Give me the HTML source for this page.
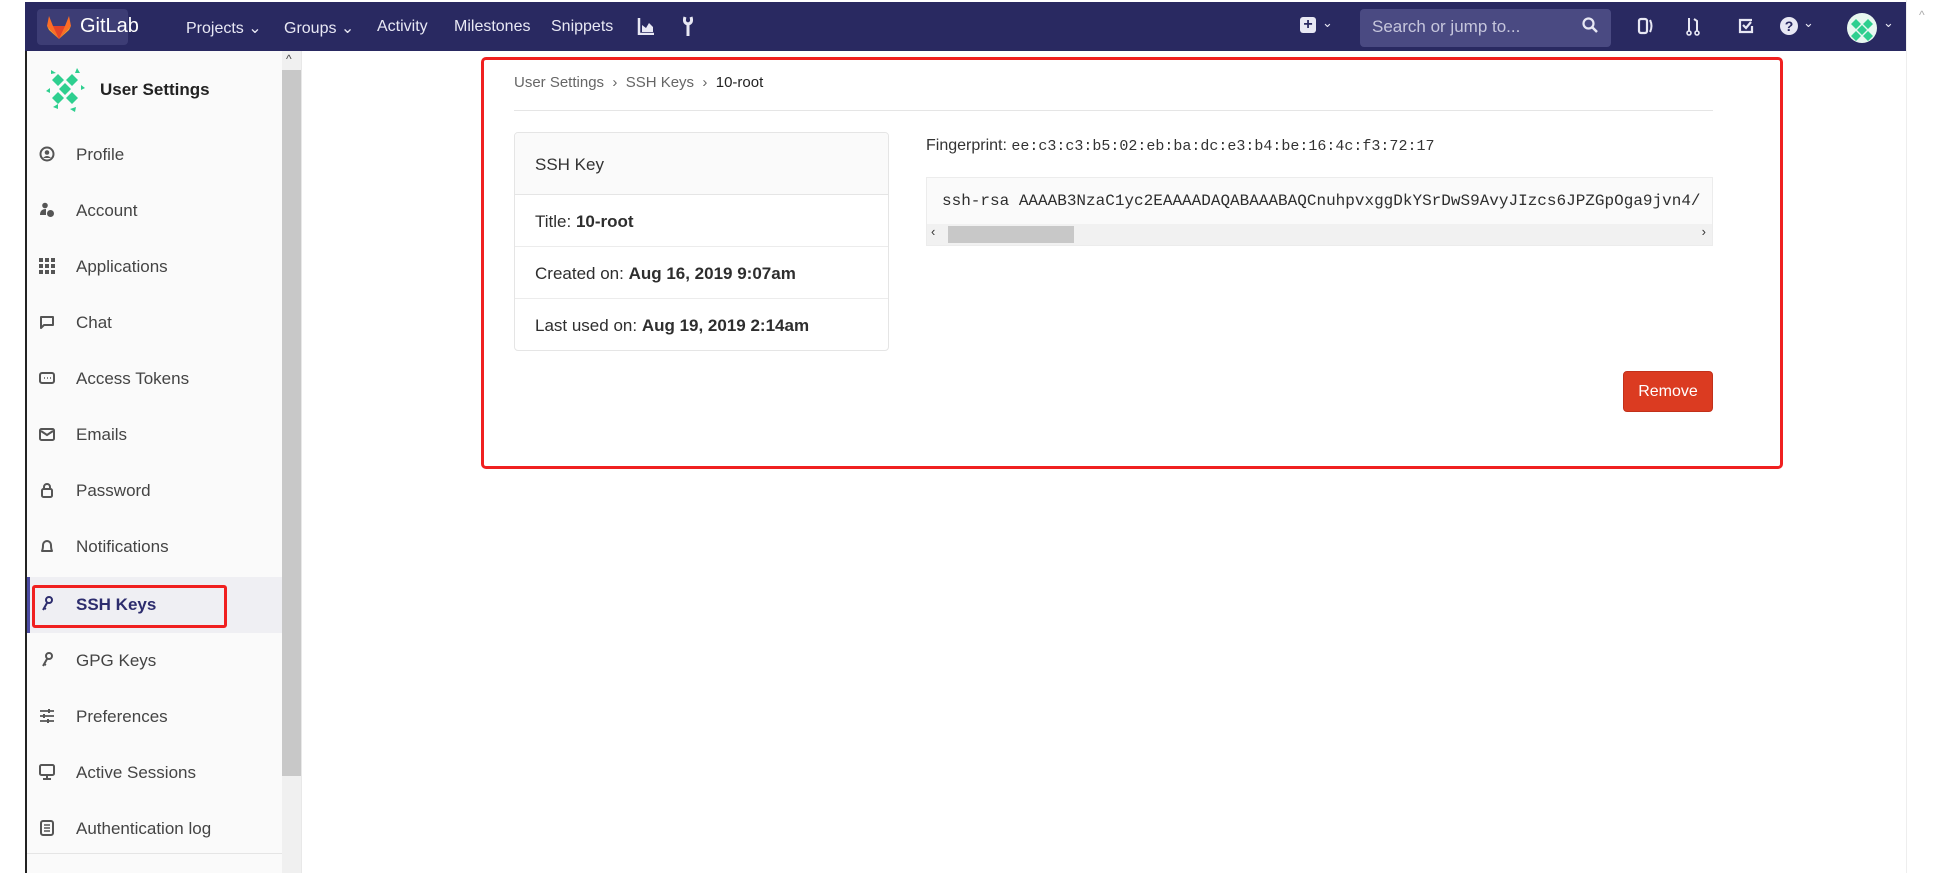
<!DOCTYPE html>
<html><head><meta charset="utf-8"><style>
*{box-sizing:border-box;margin:0;padding:0}
body{width:1946px;height:873px;overflow:hidden;background:#fff;font-family:"Liberation Sans",sans-serif;position:relative;color:#2e2e2e}
.abs{position:absolute}
#nav{left:25px;top:2px;width:1881px;height:49px;background:#292961;color:#fff;font-size:16px}
#nav .it{position:absolute;top:16px;color:#e8e8f4}
#side{left:25px;top:51px;width:257px;height:822px;background:#fafafa;border-left:2px solid #222}
.si{position:absolute;left:0;width:257px;height:56px;font-size:17px;color:#444}
.si span{position:absolute;left:49px;top:18px}
.si svg{position:absolute;left:12px;top:19px}
</style></head><body>
<div class="abs" style="left:0;top:0;width:1946px;height:2px;background:#fff"></div>
<div id="nav" class="abs">
 <div class="abs" style="left:12px;top:7px;width:91px;height:36px;background:#3d3d75;border-radius:4px"></div>
 <svg class="abs" style="left:20px;top:12px" width="28" height="26" viewBox="0 0 28 26"><path d="M14 25L2 12 4 2 8 12H20L24 2 26 12Z" fill="#fc6d26"/><path d="M14 25L8 12H20Z" fill="#e24329"/><path d="M2 12l12 13L4 16Z" fill="#fca326"/><path d="M26 12L14 25 24 16Z" fill="#fca326"/></svg>
 <div class="it" style="left:55px;top:13px;font-size:20px;color:#fff">GitLab</div>
 <div class="it" style="left:161px">Projects ⌄</div>
 <div class="it" style="left:259px">Groups ⌄</div>
 <div class="it" style="left:352px">Activity</div>
 <div class="it" style="left:429px">Milestones</div>
 <div class="it" style="left:526px">Snippets</div>
 <svg class="abs" style="left:612px;top:15px" width="18" height="18"><path d="M2 1V17H17" stroke="#e8e8f4" stroke-width="2.5" fill="none"/><path d="M5 15V8L9 11 12 6 16 10V15Z" fill="#e8e8f4"/></svg>
 <svg class="abs" style="left:657px;top:13px" width="12" height="22"><path d="M6 21V9M3 2Q1 8 6 9Q11 8 9 2" stroke="#e8e8f4" stroke-width="3" fill="none"/></svg>
 <div class="abs" style="left:1275px;top:15px;width:16px;height:16px;background:#e8e8f4;border-radius:3px;color:#292961;font-weight:bold;font-size:16px;line-height:16px;text-align:center">+</div>
 <div class="it" style="left:1297px;top:13px;font-size:13px">⌄</div>
 <div class="abs" style="left:1335px;top:7px;width:251px;height:38px;background:#4a4a82;border-radius:4px"></div>
 <div class="it" style="left:1347px;top:15px;color:#c6c6dc;font-size:17px">Search or jump to...</div>
 <svg class="abs" style="left:1557px;top:15px" width="16" height="16"><circle cx="6.5" cy="6.5" r="5" stroke="#e8e8f4" stroke-width="2.2" fill="none"/><path d="M10 10L15 15" stroke="#e8e8f4" stroke-width="2.5"/></svg>
 <svg class="abs" style="left:1612px;top:15px" width="18" height="18"><rect x="2" y="2" width="8" height="14" rx="2" stroke="#e8e8f4" stroke-width="2.2" fill="none"/><path d="M13 3Q16 9 13 15" stroke="#e8e8f4" stroke-width="2" fill="none"/></svg>
 <svg class="abs" style="left:1660px;top:14px" width="16" height="20"><circle cx="4" cy="17" r="2" stroke="#e8e8f4" stroke-width="1.6" fill="none"/><circle cx="12" cy="17" r="2" stroke="#e8e8f4" stroke-width="1.6" fill="none"/><path d="M4 15V2M12 15V5L9 3" stroke="#e8e8f4" stroke-width="2" fill="none"/></svg>
 <svg class="abs" style="left:1712px;top:15px" width="18" height="18"><path d="M15 3H3V15H15V9" stroke="#e8e8f4" stroke-width="2.2" fill="none"/><path d="M6 8L9 11 14 5" stroke="#e8e8f4" stroke-width="2.2" fill="none"/></svg>
 <div class="abs" style="left:1755px;top:15px;width:18px;height:18px;background:#e8e8f4;border-radius:50%;color:#292961;font-weight:bold;font-size:14px;line-height:18px;text-align:center">?</div>
 <div class="it" style="left:1778px;top:13px;font-size:13px">⌄</div>
 <div class="abs" style="left:1822px;top:11px;width:30px;height:30px;border-radius:50%;background:#e8f7f0;overflow:hidden"><svg width="30" height="30"><g fill="#2ecf8f"><path d="M9 6l5 5-5 5-5-5zM21 6l5 5-5 5-5-5zM15 12l5 5-5 5-5-5zM9 18l5 5-5 5-5-5zM21 18l5 5-5 5-5-5z"/></g></svg></div>
 <div class="it" style="left:1858px;top:13px;font-size:13px">⌄</div>
</div>
<div class="abs" style="left:1906px;top:0;width:40px;height:873px;background:#fff;border-left:1px solid #eee"></div>
<div class="abs" style="left:1919px;top:8px;font-size:12px;color:#aaa">^</div>

<div id="side" class="abs">
 <svg class="abs" style="left:14px;top:15px" width="48" height="48"><g fill="#2ecf8f"><path d="M17 8l6 6-6 6-6-6zM31 8l6 6-6 6-6-6zM24 17l6 6-6 6-6-6zM17 26l6 6-6 6-6-6zM31 26l6 6-6 6-6-6z"/><path d="M5 25l4-3v5zM40 19l4 3-4 2zM10 4l5 3-5 1zM36 2l3 5h-5zM12 41l5-3 0 5zM29 43l6-2-1 5z"/></g></svg>
 <div class="abs" style="left:73px;top:29px;font-size:17px;font-weight:bold;color:#222">User Settings</div>
 <div class="si" style="top:76px"><svg width="16" height="16"><circle cx="8" cy="8" r="6.5" stroke="#555" stroke-width="2" fill="none"/><circle cx="8" cy="6.5" r="2.3" fill="#555"/><path d="M4 12q4-4 8 0" fill="#555"/></svg><span>Profile</span></div>
 <div class="si" style="top:132px"><svg width="16" height="16"><circle cx="6" cy="3.5" r="2.8" fill="#555"/><path d="M1 13q0-6 6-6v6z" fill="#555"/><circle cx="11.5" cy="11.5" r="3.5" fill="#555"/></svg><span>Account</span></div>
 <div class="si" style="top:188px"><svg width="16" height="16" fill="#555"><rect x="0" y="0" width="4" height="4"/><rect x="6" y="0" width="4" height="4"/><rect x="12" y="0" width="4" height="4"/><rect x="0" y="6" width="4" height="4"/><rect x="6" y="6" width="4" height="4"/><rect x="12" y="6" width="4" height="4"/><rect x="0" y="12" width="4" height="4"/><rect x="6" y="12" width="4" height="4"/><rect x="12" y="12" width="4" height="4"/></svg><span>Applications</span></div>
 <div class="si" style="top:244px"><svg width="16" height="16"><path d="M2 14V3h12v8H5z" stroke="#555" stroke-width="2" fill="none" stroke-linejoin="round"/></svg><span>Chat</span></div>
 <div class="si" style="top:300px"><svg width="16" height="16"><rect x="1" y="3" width="14" height="10" rx="2" stroke="#555" stroke-width="2" fill="none"/><path d="M5 8h1M8 8h1M11 8h1" stroke="#555" stroke-width="1.6"/></svg><span>Access Tokens</span></div>
 <div class="si" style="top:356px"><svg width="16" height="16"><rect x="1" y="3" width="14" height="11" rx="1.5" stroke="#555" stroke-width="2" fill="none"/><path d="M2 5l6 4 6-4" stroke="#555" stroke-width="2" fill="none"/></svg><span>Emails</span></div>
 <div class="si" style="top:412px"><svg width="16" height="16"><rect x="3" y="7" width="10" height="8" rx="1.5" stroke="#555" stroke-width="2" fill="none"/><path d="M5 7V5a3 3 0 0 1 6 0v2" stroke="#555" stroke-width="2" fill="none"/></svg><span>Password</span></div>
 <div class="si" style="top:468px"><svg width="16" height="16"><path d="M3 13q1-2 1-6a4 4 0 0 1 8 0q0 4 1 6z" stroke="#555" stroke-width="2" fill="none" stroke-linejoin="round"/></svg><span>Notifications</span></div>
 <div class="si" style="top:526px;background:#efeff3;border-left:3px solid #4b4ba3;color:#2d2d6e;font-weight:bold"><svg width="16" height="16" style="left:9px"><circle cx="10" cy="4" r="3" stroke="#2d2d6e" stroke-width="2" fill="none"/><path d="M8 7L4 14M5 12l2 1" stroke="#2d2d6e" stroke-width="2"/></svg><span style="left:46px">SSH Keys</span></div>
 <div class="abs" style="left:5px;top:534px;width:195px;height:43px;border:3px solid #f02020;border-radius:3px"></div>
 <div class="si" style="top:582px"><svg width="16" height="16"><circle cx="10" cy="4" r="3" stroke="#555" stroke-width="2" fill="none"/><path d="M8 7L4 14M5 12l2 1" stroke="#555" stroke-width="2"/></svg><span>GPG Keys</span></div>
 <div class="si" style="top:638px"><svg width="16" height="16"><path d="M1 3h14M1 8h14M1 13h14" stroke="#555" stroke-width="1.8"/><path d="M10 1v4M5 6v4M9 11v4" stroke="#555" stroke-width="2"/></svg><span>Preferences</span></div>
 <div class="si" style="top:694px"><svg width="16" height="16"><rect x="1" y="1" width="14" height="10" rx="1.5" stroke="#555" stroke-width="2" fill="none"/><path d="M4 15h8M8 11v4" stroke="#555" stroke-width="2"/></svg><span>Active Sessions</span></div>
 <div class="si" style="top:750px"><svg width="16" height="16"><rect x="2" y="1" width="12" height="14" rx="2" stroke="#555" stroke-width="2" fill="none"/><path d="M5 5h6M5 8h6M5 11h6" stroke="#555" stroke-width="1.6"/></svg><span>Authentication log</span></div>
 <div class="abs" style="left:0;top:802px;width:257px;height:1px;background:#e5e5e5"></div>
</div>
<div class="abs" style="left:282px;top:51px;width:19px;height:822px;background:#f0f0f0"></div>
<div class="abs" style="left:282px;top:70px;width:19px;height:706px;background:#c8c8c8"></div>
<div class="abs" style="left:286px;top:52px;font-size:12px;color:#444">^</div>
<div class="abs" style="left:301px;top:51px;width:1px;height:822px;background:#e8e8e8"></div>

<div class="abs" style="left:514px;top:74px;font-size:15px;color:#666">User Settings &nbsp;›&nbsp; SSH Keys &nbsp;›&nbsp; <span style="color:#222">10-root</span></div>
<div class="abs" style="left:514px;top:110px;width:1199px;height:1px;background:#e5e5e5"></div>
<div class="abs" style="left:514px;top:132px;width:375px;height:219px;border:1px solid #e5e5e5;border-radius:4px;overflow:hidden;font-size:17px">
 <div style="height:62px;background:#fafafa;border-bottom:1px solid #e5e5e5;padding:22px 20px;color:#333">SSH Key</div>
 <div style="height:52px;border-bottom:1px solid #ececec;padding:17px 20px">Title: <b>10-root</b></div>
 <div style="height:52px;border-bottom:1px solid #ececec;padding:17px 20px">Created on: <b>Aug 16, 2019 9:07am</b></div>
 <div style="height:52px;padding:17px 20px">Last used on: <b>Aug 19, 2019 2:14am</b></div>
</div>
<div class="abs" style="left:926px;top:137px;font-size:16px;color:#333">Fingerprint: <span style="font-family:'Liberation Mono',monospace;font-size:15px">ee:c3:c3:b5:02:eb:ba:dc:e3:b4:be:16:4c:f3:72:17</span></div>
<div class="abs" style="left:926px;top:177px;width:787px;height:69px;background:#fafafa;border:1px solid #ececec;overflow:hidden">
 <div style="position:absolute;left:15px;top:14px;font-family:'Liberation Mono',monospace;font-size:16px;white-space:nowrap;color:#2e2e2e">ssh-rsa AAAAB3NzaC1yc2EAAAADAQABAAABAQCnuhpvxggDkYSrDwS9AvyJIzcs6JPZGpOga9jvn4/</div>
 <div style="position:absolute;left:0;top:46px;width:787px;height:21px;background:#f1f1f1"></div>
 <div style="position:absolute;left:21px;top:48px;width:126px;height:17px;background:#c8c8c8"></div>
 <div style="position:absolute;left:4px;top:46px;font-size:13px;color:#333">‹</div>
 <div style="position:absolute;right:6px;top:46px;font-size:13px;color:#333">›</div>
</div>
<div class="abs" style="left:1623px;top:371px;width:90px;height:41px;background:#db3b21;border:1px solid #c2301a;border-radius:4px;color:#fff;font-size:16px;text-align:center;line-height:39px">Remove</div>
<div class="abs" style="left:481px;top:57px;width:1302px;height:412px;border:3px solid #f02020;border-radius:5px"></div>
</body></html>
